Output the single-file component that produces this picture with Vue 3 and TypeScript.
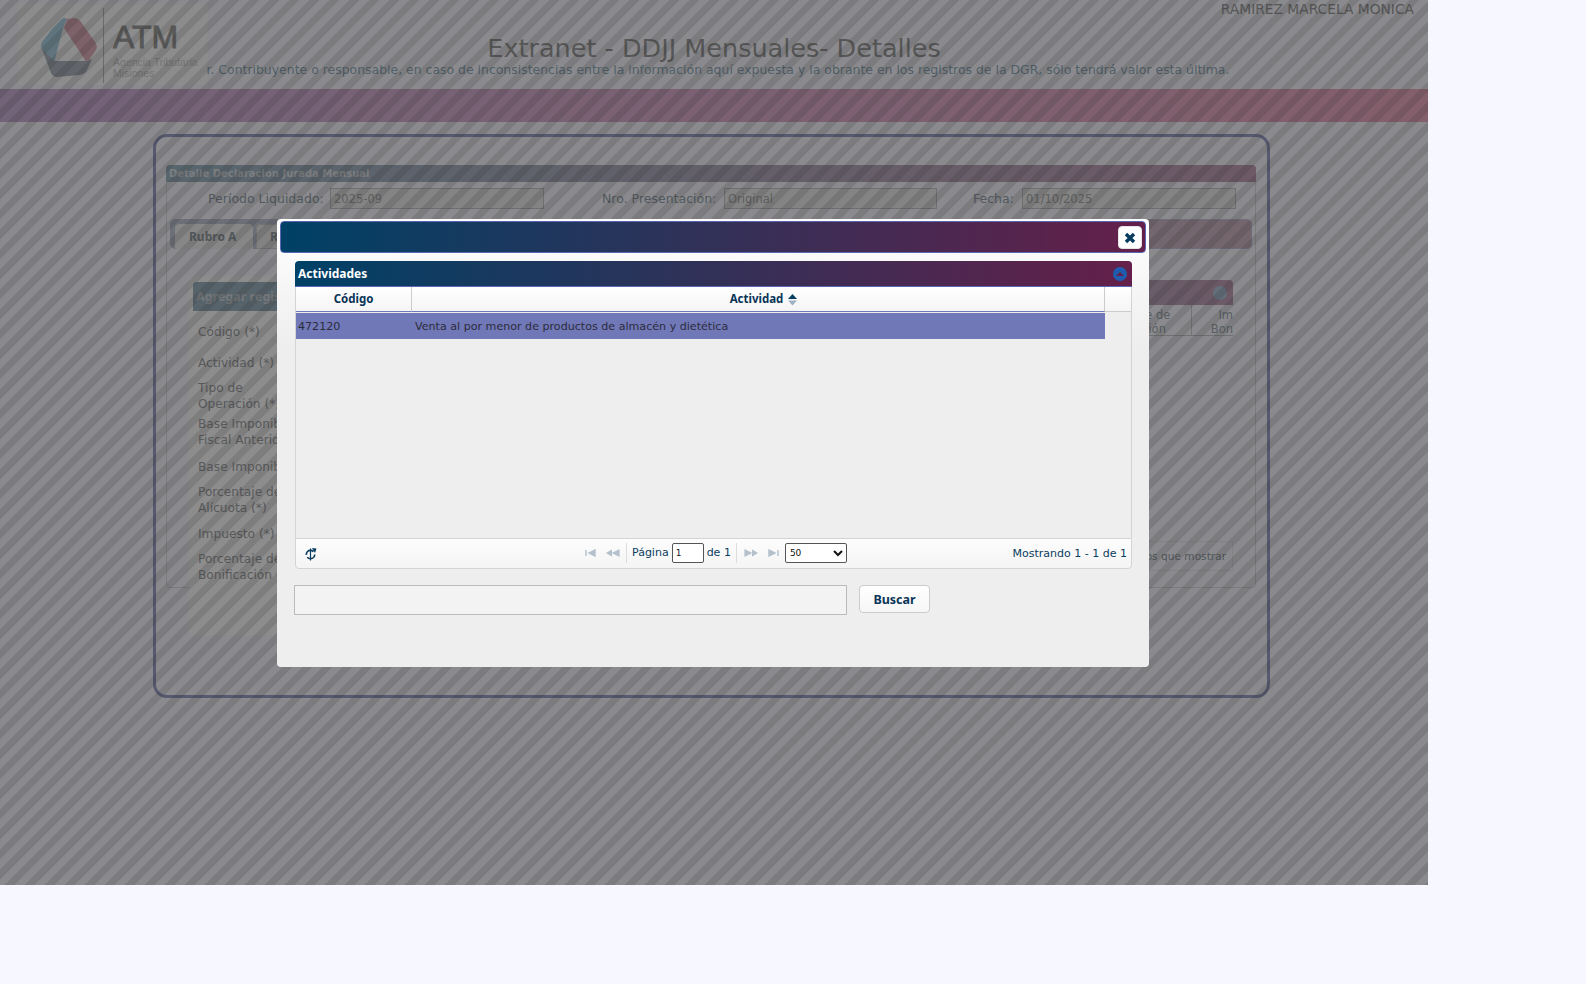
<script setup lang="ts">
const labels: string[] = [
  'Código (*)',
  'Actividad (*)',
  'Tipo de Operación (*)',
  'Base Imponible Ejercicio Fiscal Anterior (*)',
  'Base Imponible (*)',
  'Porcentaje de Alícuota (*)',
  'Impuesto (*)',
  'Porcentaje de Bonificación (*)',
]
const labelClasses: string[] = ['l1', 'l2', 'l3', 'l4', 'l5', 'l6', 'l7', 'l8']
</script>

<template>
  <div class="page">
    <header class="top">
      <div class="user">RAMIREZ MARCELA MONICA</div>
      <h1 class="title">Extranet - DDJJ Mensuales- Detalles</h1>
      <p class="notice">Sr. Contribuyente o responsable, en caso de inconsistencias entre la información aquí expuesta y la obrante en los registros de la DGR, sólo tendrá valor esta última.</p>
      <div class="logo">
        <svg class="logo-mark" width="60" height="64" viewBox="0 0 60 64">
          <path d="M12 13 L22 3 Q24 1 27 3 L23 12 L14 47 L2 33 Q0 30 2 26 Z" fill="#9cc8dc" />
          <path d="M27 3 L34 2 Q38 2 41 6 L55 26 Q58 30 56 34 L47 47 L24 12 Z" fill="#dca0b0" />
          <path d="M2 33 L14 45 L47 45 L52 43 L47 54 Q45 58 40 59 L17 61 Q13 61 11 57 Z" fill="#a0a8b4" />
        </svg>
        <div class="logo-rule"></div>
        <div class="logo-text">
          <div class="logo-atm">ATM</div>
          <div class="logo-sub">Agencia Tributaria<br />Misiones</div>
        </div>
      </div>
    </header>
    <div class="band"></div>

    <main class="outer">
      <section class="inner">
        <div class="inner-title">Detalle Declaración Jurada Mensual</div>
        <div class="fields">
          <label class="fld f1">Período Liquidado:</label>
          <div class="ro r1">2025-09</div>
          <label class="fld f2">Nro. Presentación:</label>
          <div class="ro r2">Original</div>
          <label class="fld f3">Fecha:</label>
          <div class="ro r3">01/10/2025</div>
        </div>
        <div class="tabs">
          <div class="tab active">Rubro A</div>
          <div class="tab">Rubro B</div>
        </div>
        <div class="tab-body">
          <div class="add-panel">
            <div class="add-head">Agregar registro</div>
            <div v-for="(l, i) in labels" :key="l" class="add-label" :class="labelClasses[i]">{{ l }}</div>
          </div>
          <div class="list-panel">
            <div class="list-head"><span class="list-toggle"></span></div>
            <div class="list-cols">
              <div class="lc lc1">Porcentaje de<br />Bonificación</div>
              <div class="lc lc2"><span>Importe<br />Bonificado</span></div>
            </div>
            <div class="list-empty">No hay registros que mostrar</div>
          </div>
        </div>
      </section>
    </main>

    <div class="overlay"></div>

    <div class="dialog">
      <div class="dlg-title">
        <button class="dlg-close" type="button" aria-label="Cerrar">
          <svg width="12" height="12" viewBox="0 0 12 12">
            <path d="M2 2 L10 10 M10 2 L2 10" stroke="#073b60" stroke-width="3.4" fill="none" />
          </svg>
        </button>
      </div>
      <div class="grid">
        <div class="grid-title">
          <span>Actividades</span>
          <span class="toggle"><i></i></span>
        </div>
        <div class="grid-head">
          <div class="gh gh1">Código</div>
          <div class="gh gh2">
            Actividad
            <svg class="sort" width="9" height="13" viewBox="0 0 9 13">
              <path d="M4.5 1 L9 6 L0 6 Z" fill="#0a3d62" />
              <path d="M0 7.5 L9 7.5 L4.5 12.5 Z" fill="#9fb2c4" />
            </svg>
          </div>
          <div class="gh gh3"></div>
        </div>
        <div class="grid-body">
          <div class="grid-row">
            <div class="gc gc1">472120</div>
            <div class="gc gc2">Venta al por menor de productos de almacén y dietética</div>
          </div>
        </div>
        <div class="pager">
          <svg class="refresh" width="13" height="14" viewBox="0 0 13 14">
            <circle cx="6.5" cy="7.5" r="4.2" stroke="#0a3d62" stroke-width="1.7" fill="none" stroke-dasharray="10 2.5 10 4" />
            <path d="M6.5 1.5 L6.5 13.5" stroke="#0a3d62" stroke-width="1.2" />
            <path d="M8 1 L12.5 1.5 L11 6 Z" fill="#0a3d62" />
          </svg>
          <div class="pager-mid">
            <svg class="pg p-first" width="11" height="8" viewBox="0 0 11 8"><path d="M1 1 V7 M10 1 V7 L4 4 Z" stroke="#b4c0cb" stroke-width="1.4" fill="#b4c0cb" /></svg>
            <svg class="pg p-prev" width="14" height="8" viewBox="0 0 14 8"><path d="M6 1 L1 4 L6 7 M13 1 V7 L7 4 Z" stroke="#b4c0cb" stroke-width="1.2" fill="#b4c0cb" /></svg>
            <span class="pg-sep s1"></span>
            <span class="pg-text">Página</span>
            <input class="pg-input" value="1" />
            <span class="pg-text">de 1</span>
            <span class="pg-sep s2"></span>
            <svg class="pg p-next" width="14" height="8" viewBox="0 0 14 8"><path d="M1 1 V7 L7 4 Z M8 1 L13 4 L8 7" stroke="#b4c0cb" stroke-width="1.2" fill="#b4c0cb" /></svg>
            <svg class="pg p-last" width="11" height="8" viewBox="0 0 11 8"><path d="M1 1 V7 L7 4 Z M10 1 V7" stroke="#b4c0cb" stroke-width="1.4" fill="#b4c0cb" /></svg>
            <select class="pg-select">
              <option>50</option>
              <option>100</option>
            </select>
          </div>
          <div class="pager-info">Mostrando 1 - 1 de 1</div>
        </div>
      </div>
      <div class="search">
        <input class="search-input" />
        <button class="search-btn" type="button">Buscar</button>
      </div>
    </div>
  </div>
</template>

<style>
html, body { background: #f7f7ff; }
body { min-height: 984px; }
</style>

<style scoped>
.page {
  position: relative;
  width: 1428px;
  height: 885px;
  overflow: hidden;
  background: #f7f7ff;
  font-family: "DejaVu Sans", Verdana, sans-serif;
}
.top {
  position: relative;
  height: 89px;
  text-align: center;
}
.user {
  text-align: right;
  padding-right: 14px;
  padding-top: 1px;
  font-size: 13.8px;
  line-height: 16px;
  color: #8a8a8a;
}
.title {
  margin: 17px 0 0;
  font-size: 25.5px;
  line-height: 28px;
  font-weight: 400;
  color: #8a8a8a;
}
.notice {
  margin: 0;
  font-size: 12.45px;
  line-height: 16px;
  color: #7d9db0;
  white-space: nowrap;
}
.logo {
  position: absolute;
  left: 18px;
  top: 5px;
  width: 189px;
  height: 80px;
  display: flex;
  background: #fbfbfb;
}
.logo-mark { margin: 11px 0 0 22px; flex: none; }
.logo-rule { width: 1px; height: 75px; margin: 3px 0 0 3px; background: #b5b5b5; flex: none; }
.logo-text { margin-left: 9px; text-align: left; font-family: "Liberation Sans", sans-serif; }
.logo-atm { font-size: 32px; line-height: 34px; margin-top: 15px; font-weight: 400; color: #8c8c8c; -webkit-text-stroke: .8px #8c8c8c; }
.logo-sub { font-size: 10.5px; line-height: 11px; margin-top: 3px; color: #c8c8c8; white-space: nowrap; }
.band {
  height: 33px;
  background: linear-gradient(90deg, #c5a4d3, #e99bb6);
}
.outer {
  margin: 12px 0 0 153px;
  width: 1117px;
  height: 564px;
  box-sizing: border-box;
  border: 3px solid #8a8fbf;
  border-radius: 14px;
  padding: 28px 11px 0 10px;
}
.inner {
  height: 423px;
  border: 1px solid #d6d6d6;
  border-radius: 4px;
  box-sizing: border-box;
}
.inner-title {
  height: 17px;
  margin: -1px -1px 0;
  padding-left: 3px;
  line-height: 17px;
  font-size: 10px;
  font-weight: 700;
  color: #d8dde0;
  border-radius: 4px 4px 0 0;
  background: linear-gradient(90deg, #8eaabb, #ba90ab);
}
.fields {
  position: relative;
  height: 37px;
}
.fld {
  position: absolute;
  top: 9px;
  font-size: 12.5px;
  line-height: 16px;
  color: #7f8f9a;
  white-space: nowrap;
}
.ro {
  position: absolute;
  top: 6px;
  height: 21px;
  box-sizing: border-box;
  border: 1px solid #bcbcbc;
  background: #e9e9e9;
  padding-left: 3px;
  line-height: 20px;
  font-size: 11.5px;
  color: #9a9a9a;
}
.f1 { left: 41px; }
.r1 { left: 163px; width: 214px; }
.f2 { left: 435px; }
.r2 { left: 557px; width: 213px; }
.f3 { left: 806px; }
.r3 { left: 855px; width: 214px; }
.tabs {
  margin: 0 3px 0 3px;
  height: 30px;
  box-sizing: border-box;
  border: 1px solid #b9bcd6;
  border-radius: 5px;
  background: linear-gradient(90deg, #b7bed0, #c9a9ba);
  display: flex;
  gap: 3px;
  padding: 4px 0 0 4px;
}
.tab {
  width: 78px;
  box-sizing: border-box;
  height: 25px;
  background: #e6e6e6;
  border-radius: 4px 4px 0 0;
  border: 1px solid #c8c8c8;
  padding-left: 13px;
  font-family: "Noto Sans", sans-serif;
  font-size: 12px;
  font-weight: 700;
  line-height: 24px;
  color: #7f8a92;
  white-space: nowrap;
}
.tab.active { background: #efefef; border-color: #efefef; }
.tab-body {
  display: flex;
  justify-content: space-between;
  padding: 28px 22px 0 22px;
}
.add-panel {
  position: relative;
  width: 420px;
  height: 358px;
  box-sizing: border-box;
  margin-left: 0;
  background: #fcfcfc;
  padding: 5px 4px 0;
}
.add-head {
  height: 29px;
  border-radius: 4px 4px 0 0;
  padding-left: 3px;
  line-height: 29px;
  font-family: "Noto Sans", sans-serif;
  font-size: 12.5px;
  font-weight: 700;
  color: #c8d0d6;
  background: #8ba5b4;
}
.add-label {
  position: absolute;
  left: 9px;
  width: 102px;
  font-size: 12.2px;
  line-height: 16px;
  color: #8f9295;
}
.l1 { top: 47px; white-space: nowrap; }
.l2 { top: 78px; white-space: nowrap; }
.l3 { top: 103px; }
.l4 { top: 139px; width: 160px; }
.l5 { top: 182px; white-space: nowrap; }
.l6 { top: 207px; }
.l7 { top: 249px; white-space: nowrap; }
.l8 { top: 274px; }
.list-panel { width: 400px; padding-top: 3px; }
.list-head {
  height: 25px;
  border-radius: 4px 4px 0 0;
  background: linear-gradient(90deg, #8eaabb, #ba90ab);
  display: flex;
  justify-content: flex-end;
  align-items: center;
  padding-right: 6px;
}
.list-toggle {
  width: 14px;
  height: 14px;
  border-radius: 50%;
  background: #a3bcd6;
}
.list-cols {
  display: flex;
  justify-content: flex-end;
  height: 30px;
  border-bottom: 1px solid #c0c0c0;
  overflow: hidden;
}
.lc {
  font-size: 11.5px;
  line-height: 14px;
  padding-top: 3px;
  text-align: center;
  color: #8d9aa3;
  white-space: nowrap;
  overflow: hidden;
}
.lc1 { width: 120px; border-right: 1px solid #c8c8c8; }
.lc2 { width: 41px; flex: none; }
.lc2 span { display: block; width: 98px; }
.list-empty {
  margin-top: 205px;
  height: 30px;
  border: 1px solid #e6e6e6;
  box-sizing: border-box;
  text-align: right;
  padding-right: 6px;
  line-height: 28px;
  font-size: 10.6px;
  color: #7f8a93;
}
.overlay {
  position: absolute;
  inset: 0;
  background: repeating-linear-gradient(135deg, rgba(40, 40, 40, .525) 0 7.07px, rgba(40, 40, 40, .595) 7.07px 14.14px);
}
.dialog {
  position: absolute;
  left: 277px;
  top: 219px;
  width: 872px;
  height: 448px;
  box-sizing: border-box;
  padding: 2px 3px 3px;
  border-radius: 4px;
  background: linear-gradient(180deg, #ffffff 0, #eeeeee 130px);
}
.dlg-title {
  height: 32px;
  box-sizing: border-box;
  border: 1px solid #5a68b4;
  border-radius: 4px;
  background: linear-gradient(90deg, #004166, #64204a);
  display: flex;
  justify-content: flex-end;
  padding: 4px 3px 0 0;
}
.dlg-close {
  width: 24px;
  height: 23px;
  padding: 0;
  border: 1px solid #e4e4e4;
  border-radius: 4px;
  background: #fff;
  display: flex;
  align-items: center;
  justify-content: center;
}
.grid {
  margin: 8px 14px 0 15px;
  height: 308px;
  display: flex;
  flex-direction: column;
  box-sizing: border-box;
  border-radius: 4px;
}
.grid-title {
  flex: none;
  height: 26px;
  box-sizing: border-box;
  border-bottom: 1px solid #5a68b4;
  border-radius: 4px 4px 0 0;
  background: linear-gradient(90deg, #004166, #64204a);
  padding: 0 5px 0 3px;
  display: flex;
  align-items: center;
  justify-content: space-between;
  color: #fff;
  font-family: "Noto Sans", sans-serif;
  font-size: 12px;
  font-weight: 700;
}
.toggle {
  width: 14px;
  height: 14px;
  border-radius: 50%;
  background: #1f5cb0;
  display: flex;
  align-items: center;
  justify-content: center;
}
.toggle i {
  width: 0;
  height: 0;
  border: 4px solid transparent;
  border-top: 0;
  border-bottom: 4px solid #64204a;
}
.grid-head {
  flex: none;
  display: flex;
  height: 25px;
  box-sizing: border-box;
  background: linear-gradient(180deg, #fff 0, #f4f4f4 100%);
  border-left: 1px solid #d4d4d4;
  border-right: 1px solid #d4d4d4;
}
.gh {
  box-sizing: border-box;
  border-right: 1px solid #ccc;
  border-bottom: 1px solid #6f78bc;
  text-align: center;
  font-family: "Noto Sans", sans-serif;
  font-size: 11.5px;
  font-weight: 700;
  line-height: 23px;
  color: #0a3558;
}
.gh1 { width: 116px; }
.gh2 { width: 693px; padding-left: 11px; }
.gh3 { flex: 1; border-right: 0; border-bottom: 1px solid #ccc; }
.sort { vertical-align: -3px; margin-left: 2px; }
.grid-body {
  flex: 1;
  background: #eee;
  border-left: 1px solid #d4d4d4;
  border-right: 1px solid #d4d4d4;
  padding-top: 1px;
}
.grid-row {
  display: flex;
  width: 809px;
  height: 26px;
  background: #7078b8;
  font-size: 11.1px;
  line-height: 28px;
  color: #2c2c3c;
  box-sizing: border-box;
}
.gc { box-sizing: border-box; padding-left: 2px; white-space: nowrap; }
.gc1 { width: 116px; }
.gc2 { padding-left: 3px; }
.pager {
  flex: none;
  height: 31px;
  box-sizing: border-box;
  position: relative;
  border: 1px solid #d4d4d4;
  border-radius: 0 0 4px 4px;
  background: linear-gradient(180deg, #fdfdfd, #f4f4f4);
  display: flex;
  align-items: center;
  padding: 0 4px 0 8px;
  font-size: 11px;
  color: #0a3d62;
}
.pager-mid {
  position: absolute;
  left: 289px;
  top: 4px;
  display: flex;
  align-items: center;
  height: 20px;
}
.pg { flex: none; }
.pg-text { margin-bottom: 2px; }
.p-prev { margin-left: 10px; }
.pg-sep { width: 1px; height: 20px; background: #ddd; margin: 0 6px; }
.pg-sep.s1 { margin: 0 5px 0 6px; }
.pg-sep.s2 { margin-left: 5px; }
.pg-input {
  width: 32px;
  height: 20px;
  margin: 0 3px;
  padding: 0 3px;
  box-sizing: border-box;
  border: 1px solid #555;
  border-radius: 2px;
  background: #fff;
  font: 9px "DejaVu Sans", sans-serif;
  color: #222;
}
.p-next { margin-left: 1px; }
.p-last { margin-left: 10px; margin-right: 6px; }
.pg-select {
  width: 62px;
  height: 20px;
  border: 1px solid #555;
  border-radius: 2px;
  background: #fff;
  font: 9px "DejaVu Sans", sans-serif;
  color: #111;
}
.pager-info { margin-left: auto; }
.search {
  display: flex;
  align-items: flex-start;
  margin: 16px 0 0 14px;
  gap: 12px;
}
.search-input {
  width: 553px;
  height: 30px;
  box-sizing: border-box;
  border: 1px solid #bbb;
  background: #f3f3f3;
}
.search-btn {
  width: 71px;
  height: 28px;
  padding: 0;
  box-sizing: border-box;
  border: 1px solid #ccc;
  border-radius: 4px;
  background: linear-gradient(180deg, #fff, #f6f6f6);
  font: 700 12.5px "Noto Sans", sans-serif;
  color: #0a3558;
}
</style>
